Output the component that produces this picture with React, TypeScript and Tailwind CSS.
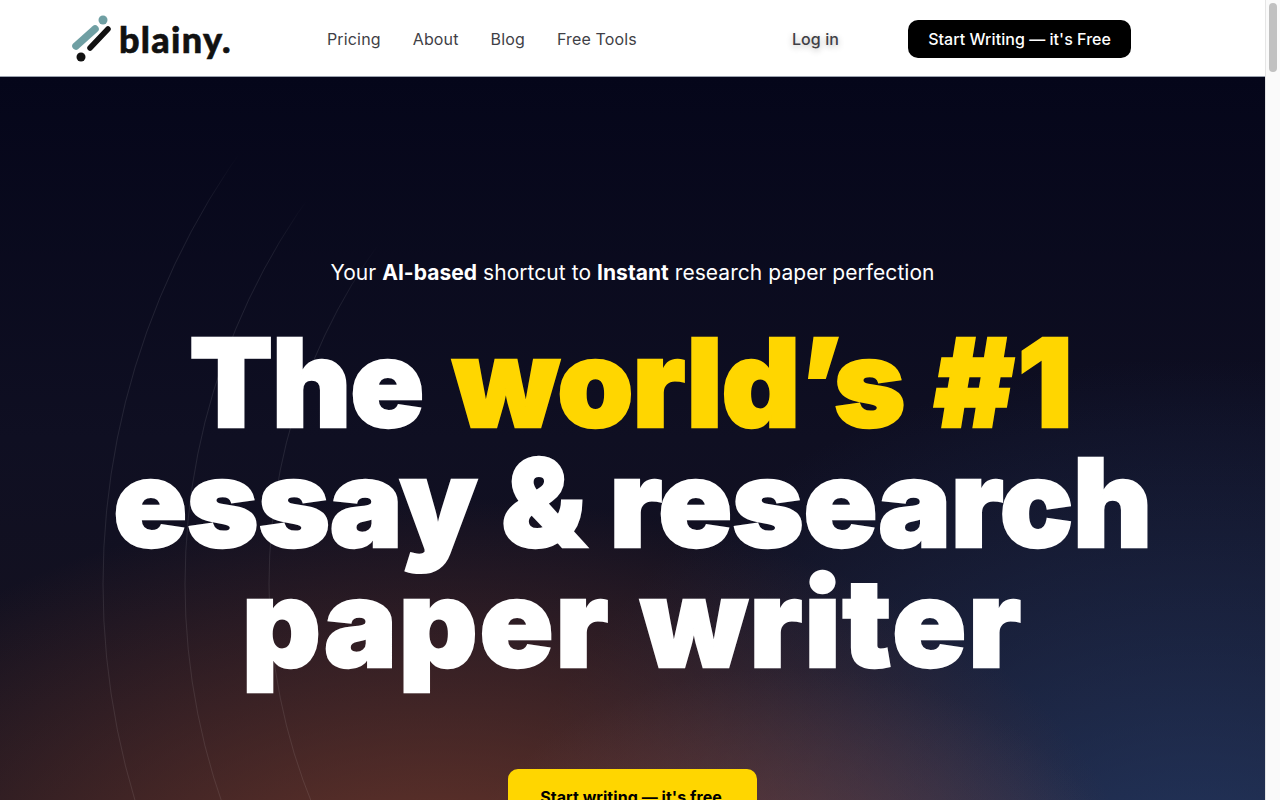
export default function App() {
  return (
    <div className="flex h-screen w-full overflow-hidden bg-white font-['Inter',sans-serif]">
      <div className="flex min-w-0 flex-1 flex-col">
        <header className="flex h-[77px] shrink-0 items-center border-b border-[#9ca3af] bg-white">
          <a className="ml-[72px] flex w-[160px] items-center">
            <svg width="42" height="48" viewBox="72 14 42 48" className="shrink-0">
              <line x1="76" y1="46" x2="95" y2="29" stroke="#6f9fa3" strokeWidth="7.5" strokeLinecap="round" />
              <circle cx="103" cy="20" r="4.5" fill="#6f9fa3" />
              <line x1="90" y1="48" x2="108" y2="29" stroke="#111" strokeWidth="5.5" strokeLinecap="round" />
              <circle cx="81" cy="57" r="4.5" fill="#111" />
            </svg>
            <span className="mt-[2px] ml-[5px] font-['Lato',sans-serif] text-[36px] leading-none font-black tracking-[1.3px] text-[#111] [-webkit-text-stroke:0.6px]">blainy.</span>
          </a>
          <nav className="mt-[2px] ml-[95px] flex gap-8 text-base tracking-[0.15px] text-[#3f3f46]">
            <a>Pricing</a>
            <a>About</a>
            <a>Blog</a>
            <a>Free Tools</a>
          </nav>
          <a className="mt-[2px] ml-[155px] text-base font-medium tracking-[0.1px] text-[#3f3f46] [text-shadow:0_2px_6px_rgba(0,0,0,0.3)]">Log in</a>
          <a className="mt-[1px] ml-[69px] flex h-[38px] w-[223px] items-center justify-center rounded-[10px] bg-black text-base font-medium tracking-[0.05px] text-white">Start Writing — it's Free</a>
        </header>
        <main className="relative flex flex-1 flex-col items-center overflow-hidden bg-[#05061a] bg-[radial-gradient(ellipse_700px_420px_at_440px_840px,rgba(125,62,46,0.85),transparent),radial-gradient(ellipse_340px_240px_at_790px_830px,rgba(100,80,100,0.55),transparent),radial-gradient(ellipse_700px_560px_at_1200px_840px,rgba(40,70,125,0.7),transparent),linear-gradient(to_bottom,#05061a_0%,#0f0f22_50%,#17131f_100%)]">
          <svg className="absolute top-0 left-0" width="1265" height="723" viewBox="0 77 1265 723" fill="none">
            <defs>
              <linearGradient id="ringFade" gradientUnits="userSpaceOnUse" x1="250" y1="320" x2="340" y2="180">
                <stop offset="0" stopColor="#ffffff" stopOpacity="0.09" />
                <stop offset="0.4" stopColor="#ffffff" stopOpacity="0.08" />
                <stop offset="0.8" stopColor="#ffffff" stopOpacity="0" />
              </linearGradient>
            </defs>
            <circle cx="851" cy="584" r="748" stroke="url(#ringFade)" />
            <circle cx="851" cy="584" r="666" stroke="url(#ringFade)" />
            <circle cx="851" cy="584" r="582" stroke="url(#ringFade)" />
          </svg>
          <p className="relative mt-[181px] font-['Inter',sans-serif] text-[21px] leading-[30px] tracking-[0.05px] text-white">
            Your <b>AI-based</b> shortcut to <b>Instant</b> research paper perfection
          </p>
          <h1 className="relative mt-[35px] text-center font-['Inter',sans-serif] text-[122px] leading-[120px] font-black tracking-[-0.3px] text-white [-webkit-text-stroke:2.5px]">
            <span className="tracking-[-1px] [word-spacing:6px]">
              The <span className="text-[#ffd600]">world’s <span className="tracking-[3px]">#1</span></span>
            </span>
            <br />
            essay &amp; research
            <br />
            <span className="tracking-[2px] [word-spacing:4px]">paper writer</span>
          </h1>
          <a className="relative mt-[86px] flex h-[56px] w-[249px] shrink-0 items-center justify-center rounded-[10px] bg-[#ffd600] pr-[3px] text-base font-bold tracking-[0.05px] text-black">Start writing — it's free</a>
        </main>
      </div>
      <aside className="w-[15px] shrink-0 border-l border-[#e5e5e5] bg-[#fafafa] px-[3px] pt-[3px]">
        <div className="h-[69px] rounded-full bg-[#c1c1c1]" />
      </aside>
    </div>
  );
}
